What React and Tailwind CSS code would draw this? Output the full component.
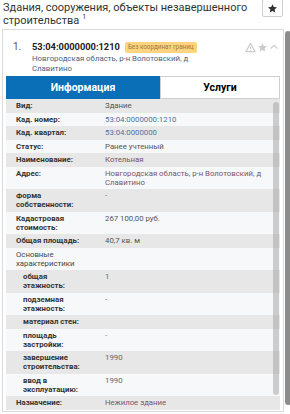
import React from "react";

const rows = [
  { label: "Вид:", value: "Здание", tone: "text-[#555]" },
  { label: "Кад. номер:", value: "53:04:0000000:1210", tone: "text-[#4f70a6]" },
  { label: "Кад. квартал:", value: "53:04:0000000", tone: "text-[#4f70a6]" },
  { label: "Статус:", value: "Ранее учтенный", tone: "text-[#555]" },
  { label: "Наименование:", value: "Котельная", tone: "text-[#7a5568]" },
  { label: "Адрес:", value: "Новгородская область, р-н Волотовский, д Славитино", tone: "text-[#7a5568]" },
  { label: "Форма собственности:", value: "-", tone: "text-[#777]" },
  { label: "Кадастровая стоимость:", value: "267 100,00 руб.", tone: "text-[#555]" },
  { label: "Общая площадь:", value: "40,7 кв. м", tone: "text-[#555]" },
  { label: "Основные характеристики", value: "", tone: "", group: true },
  { label: "общая этажность:", value: "1", tone: "text-[#4f70a6]", sub: true },
  { label: "подземная этажность:", value: "-", tone: "text-[#777]", sub: true },
  { label: "материал стен:", value: "", tone: "", sub: true },
  { label: "площадь застройки:", value: "-", tone: "text-[#777]", sub: true },
  { label: "завершение строительства:", value: "1990", tone: "text-[#666]", sub: true },
  { label: "ввод в эксплуатацию:", value: "1990", tone: "text-[#666]", sub: true },
  { label: "Назначение:", value: "Нежилое здание", tone: "text-[#7a5568]" },
];

function StarIcon({ className }) {
  return (
    <svg viewBox="0 0 24 24" className={className} fill="currentColor">
      <path d="M12 2.5l2.9 6.3 6.9.7-5.2 4.6 1.5 6.8L12 17.4l-6.1 3.5 1.5-6.8-5.2-4.6 6.9-.7z" />
    </svg>
  );
}

export default function App() {
  return (
    <div className="w-[290px] h-[414px] overflow-hidden bg-white font-['Roboto',sans-serif]">

      {/* TITLE */}
      <div className="h-[29px] flex items-start justify-between">
        <p className="pl-[3px] pt-[1px] text-[11px] leading-[13px] text-[#333]">
          Здания, сооружения, объекты незавершенного строительства
          <span className="inline-block align-top ml-[3px] text-[7px] leading-[7px]">1</span>
        </p>
        <button className="w-[21px] h-[18px] mr-[7px] mt-[-1px] shrink-0 border border-[#cfcfcf] rounded-[2px] bg-white flex items-center justify-center text-[#333]">
          <StarIcon className="w-[11px] h-[11px]" />
        </button>
      </div>

      <div className="flex pl-[2px]">
        {/* CARD */}
        <div className="w-[282px] h-[383px] border border-[#dadada] bg-white px-[3px] pt-[10px] shrink-0">

          <div className="flex pl-[7px] pr-[1px]">
            <span className="w-[19px] text-[10px] leading-[14px] text-[#555]">1.</span>
            <div className="flex-1">
              <div className="flex items-center justify-between h-[14px]">
                <div className="flex items-center gap-[5px]">
                  <span className="text-[9.3px] font-bold leading-[14px] text-[#222]">53:04:0000000:1210</span>
                  <span className="bg-[#fcd47f] rounded-[2px] px-[3px] text-[6.3px] leading-[11px] text-[#9a7a3e]">Без координат границ</span>
                </div>
                <div className="flex items-center gap-[1px] text-[#cbcbcb]">
                  <svg viewBox="0 0 24 24" className="w-[11px] h-[11px]" fill="none" stroke="currentColor" strokeWidth="2.4">
                    <path d="M12 3L2 21h20z" strokeLinejoin="round" />
                    <path d="M12 10v5M12 17.5v1.5" />
                  </svg>
                  <StarIcon className="w-[11px] h-[11px]" />
                  <svg viewBox="0 0 24 24" className="w-[10px] h-[10px]" fill="none" stroke="currentColor" strokeWidth="3">
                    <path d="M4 16l8-8 8 8" />
                  </svg>
                </div>
              </div>
              <p className="w-[170px] text-[7.8px] leading-[9.5px] text-[#4a5f80]">
                Новгородская область, р-н Волотовский, д Славитино
              </p>
            </div>
          </div>

          {/* TABS */}
          <div className="flex h-[23px] mt-[3px]">
            <div className="w-[154px] bg-[#0a6fb6] text-white text-[10.5px] font-bold flex items-center justify-center">Информация</div>
            <div className="flex-1 border border-[#d0d0d0] text-black text-[10.5px] font-bold flex items-center justify-center">Услуги</div>
          </div>

          {/* TABLE */}
          <div className="relative">
            {rows.map((r, i) => (
              <div key={i} className={`flex py-[2.25px] text-[7.8px] leading-[9px] ${i % 2 === 0 ? "bg-[#e7e7e7]" : "bg-[#f6f8fa]"}`}>
                <div className={`w-[99px] shrink-0 pr-[14px] ${r.sub ? "pl-[17px]" : "pl-[10px]"} ${r.group ? "text-[#444]" : "font-bold text-[#333]"}`}>
                  {r.label}
                </div>
                <div className={`flex-1 pr-[6px] ${r.tone}`}>{r.value}</div>
              </div>
            ))}
            <div className="absolute right-[1px] top-[3px] w-[6px] h-[293px] rounded-full bg-[rgba(150,150,150,0.45)]" />
          </div>
        </div>

        {/* OUTER SCROLLBAR */}
        <div className="w-[6px] h-[374px] mt-[2px] ml-[1px] rounded-full bg-[#8c8c8c] shrink-0" />
      </div>
    </div>
  );
}
